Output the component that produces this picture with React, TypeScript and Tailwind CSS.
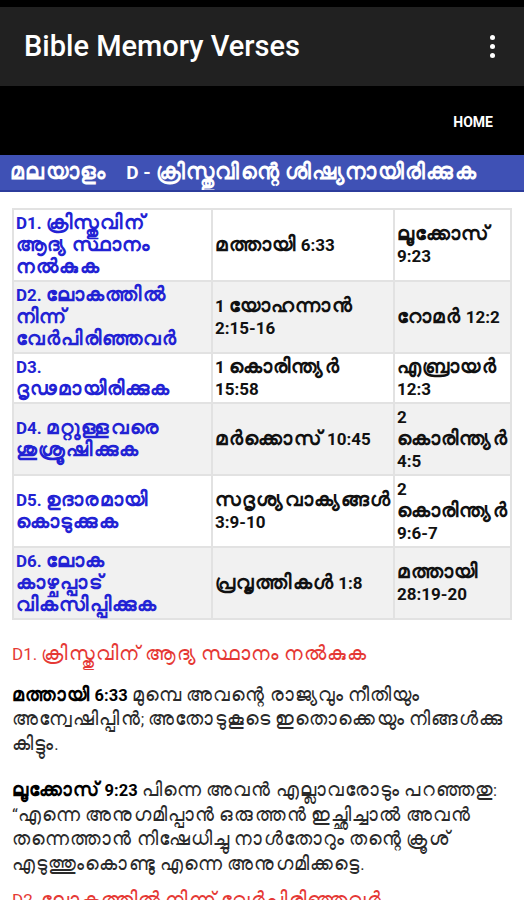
import React from "react";

type Row = {
  topic: string[];
  first: string[];
  second: string[];
};

const rows: Row[] = [
  { topic: ["D1. ക്രിസ്തുവിന്", "ആദ്യ സ്ഥാനം", "നൽകുക"], first: ["മത്തായി 6:33"], second: ["ലൂക്കോസ്", "9:23"] },
  { topic: ["D2. ലോകത്തിൽ", "നിന്ന്", "വേർപിരിഞ്ഞവർ"], first: ["1 യോഹന്നാൻ", "2:15-16"], second: ["റോമർ 12:2"] },
  { topic: ["D3.", "ദൃഢമായിരിക്കുക"], first: ["1 കൊരിന്ത്യർ", "15:58"], second: ["എബ്രായർ", "12:3"] },
  { topic: ["D4. മറ്റുള്ളവരെ", "ശുശ്രൂഷിക്കുക"], first: ["മർക്കൊസ് 10:45"], second: ["2", "കൊരിന്ത്യർ", "4:5"] },
  { topic: ["D5. ഉദാരമായി", "കൊടുക്കുക"], first: ["സദൃശ്യവാക്യങ്ങൾ", "3:9-10"], second: ["2", "കൊരിന്ത്യർ", "9:6-7"] },
  { topic: ["D6. ലോക", "കാഴ്ചപ്പാട്", "വികസിപ്പിക്കുക"], first: ["പ്രവൃത്തികൾ 1:8"], second: ["മത്തായി", "28:19-20"] },
];

// the fallback malayalam font is narrower than the phone's, so widen it a bit
const Ml: React.FC<{ text: string }> = ({ text }) => {
  const parts = text.split(/([\u0D00-\u0D7F\u200C\u200D]+)/);
  return (
    <>
      {parts.map((p, i) =>
        i % 2 === 1 ? (
          <span key={i} className="text-[1.16em] tracking-[0.06em]">
            {p}
          </span>
        ) : (
          <React.Fragment key={i}>{p}</React.Fragment>
        )
      )}
    </>
  );
};

const Lines: React.FC<{ lines: string[] }> = ({ lines }) => (
  <>
    {lines.map((l, i) => (
      <div key={i} className="whitespace-nowrap h-[22px]">
        <Ml text={l} />
      </div>
    ))}
  </>
);

const cell = "border-2 border-[#e2e2e2] px-[2px] py-[2px] align-middle text-[17px] leading-[22px] font-bold";

const App: React.FC = () => {
  return (
    <div className="min-h-screen bg-white overflow-hidden font-['Roboto','Noto_Sans',sans-serif]">
      {/* status bar + app bar */}
      <div className="h-[7px] bg-black"></div>
      <div className="h-[79px] bg-[#212121] flex items-center justify-between pl-6 pr-[29px]">
        <h1 className="text-[29px] font-medium text-white">Bible Memory Verses</h1>
        <div className="flex flex-col gap-[4px]">
          <div className="w-[5px] h-[5px] rounded-full bg-white"></div>
          <div className="w-[5px] h-[5px] rounded-full bg-white"></div>
          <div className="w-[5px] h-[5px] rounded-full bg-white"></div>
        </div>
      </div>

      {/* tabs */}
      <div className="h-[69px] bg-black flex items-center justify-end pr-[31px] pt-1">
        <span className="text-white text-[14px] font-bold">HOME</span>
      </div>

      {/* language bar */}
      <div className="h-[37px] bg-[#3f51b5] border-b-2 border-[#2c3c9c] flex items-center px-[10px] whitespace-nowrap overflow-hidden text-white text-[19px] font-bold leading-none">
        <span>
          <Ml text="മലയാളം" />
        </span>
        <span className="ml-5">
          <Ml text="D - ക്രിസ്തുവിന്റെ ശിഷ്യനായിരിക്കുക" />
        </span>
      </div>

      {/* table */}
      <div className="px-3 pt-4">
        <table className="w-full border-collapse table-fixed">
          <colgroup>
            <col className="w-[199px]" />
            <col className="w-[182px]" />
            <col />
          </colgroup>
          <tbody>
            {rows.map((r, i) => (
              <tr key={i} className={i % 2 === 1 ? "bg-[#f1f1f1]" : "bg-white"}>
                <td className={cell + " text-[#2222d4]"}>
                  <Lines lines={r.topic} />
                </td>
                <td className={cell + " text-[#111]"}>
                  <Lines lines={r.first} />
                </td>
                <td className={cell + " text-[#111]"}>
                  <Lines lines={r.second} />
                </td>
              </tr>
            ))}
          </tbody>
        </table>
      </div>

      {/* verses */}
      <div className="px-3 pt-[22px] text-[16.5px] leading-[23.5px] text-[#2a2a2a] whitespace-nowrap">
        <p className="text-[17px] text-[#e53935]">
          <Ml text="D1. ക്രിസ്തുവിന് ആദ്യ സ്ഥാനം നൽകുക" />
        </p>
        <p className="mt-[16px]">
          <b className="text-black">
            <Ml text="മത്തായി 6:33" />
          </b>{" "}
          <Ml text="മുമ്പെ അവന്റെ രാജ്യവും നീതിയും" />
          <br />
          <Ml text="അന്വേഷിപ്പിൻ; അതോടുകൂടെ ഇതൊക്കെയും നിങ്ങൾക്കു" />
          <br />
          <Ml text="കിട്ടും." />
        </p>
        <p className="mt-[22px]">
          <b className="text-black">
            <Ml text="ലൂക്കോസ് 9:23" />
          </b>{" "}
          <Ml text="പിന്നെ അവൻ എല്ലാവരോടും പറഞ്ഞതു:" />
          <br />
          <Ml text="“എന്നെ അനുഗമിപ്പാൻ ഒരുത്തൻ ഇച്ഛിച്ചാൽ അവൻ" />
          <br />
          <Ml text="തന്നെത്താൻ നിഷേധിച്ചു നാൾതോറും തന്റെ ക്രൂശ്" />
          <br />
          <Ml text="എടുത്തുംകൊണ്ടു എന്നെ അനുഗമിക്കട്ടെ." />
        </p>
        <p className="mt-[12px] text-[17px] text-[#e53935]">
          <Ml text="D2. ലോകത്തിൽ നിന്ന് വേർപിരിഞ്ഞവർ" />
        </p>
      </div>
    </div>
  );
};

export default App;
